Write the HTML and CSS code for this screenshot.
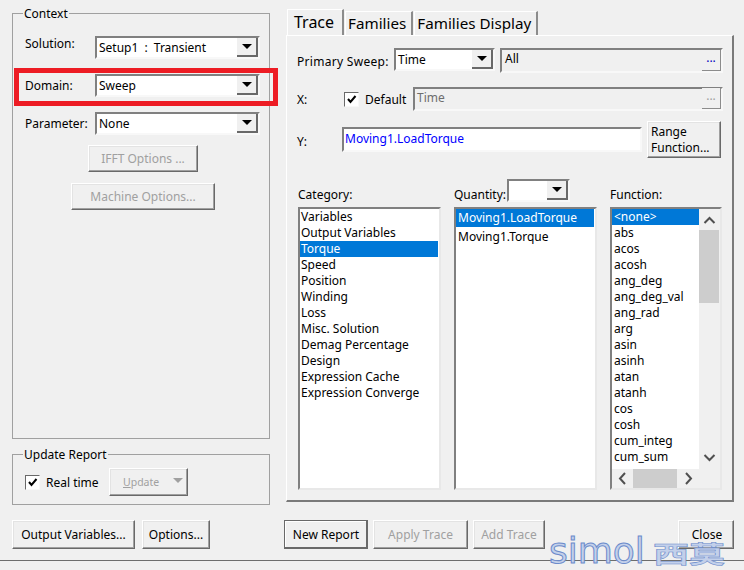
FILE: index.html
```html
<!DOCTYPE html>
<html lang="en">
<head>
  <meta charset="UTF-8" />
  <title>Report</title>
  <link rel="stylesheet" href="styles.css">
</head>
<body>
<div class="dialog">
  <div class="main">
    <!-- Left column -->
    <div class="side">
      <fieldset class="group context">
        <legend>Context</legend>
        <div class="ctx-row">
          <label class="raised">Solution:</label>
          <div class="combo wide"><span>Setup1 : Transient</span><i class="drop"><b></b></i></div>
        </div>
        <div class="ctx-row">
          <label>Domain:</label>
          <div class="combo wide"><span>Sweep</span><i class="drop"><b></b></i></div>
        </div>
        <div class="ctx-row">
          <label>Parameter:</label>
          <div class="combo wide"><span>None</span><i class="drop"><b></b></i></div>
        </div>
        <button class="btn off ifft">IFFT Options ...</button>
        <button class="btn off machine">Machine Options...</button>
      </fieldset>
      <fieldset class="group update">
        <legend>Update Report</legend>
        <div class="update-row">
          <span class="check"><svg width="11" height="11" viewBox="0 0 11 11"><path d="M2 5l2.500 3L9.500 2" fill="none" stroke="#000" stroke-width="2"/></svg></span>
          <span class="rt">Real time</span>
          <button class="btn off upd"><u>U</u>pdate<b class="up-arrow"></b></button>
        </div>
      </fieldset>
    </div>

    <!-- Tabs -->
    <div class="tabs-area">
      <div class="tabs">
        <div class="tab active">Trace</div>
        <div class="tab">Families</div>
        <div class="tab">Families Display</div>
      </div>
      <div class="panel">
        <div class="sweep-row">
          <label class="sweep-label">Primary Sweep:</label>
          <div class="combo time"><span>Time</span><i class="drop"><b></b></i></div>
          <div class="field all"><span>All</span><button class="dots">...</button></div>
        </div>
        <div class="x-row">
          <label class="x-label">X:</label>
          <span class="check"><svg width="11" height="11" viewBox="0 0 11 11"><path d="M2 5l2.500 3L9.500 2" fill="none" stroke="#000" stroke-width="2"/></svg></span>
          <span class="default">Default</span>
          <div class="field xval"><span>Time</span><button class="dots dim">...</button></div>
        </div>
        <div class="y-row">
          <label class="y-label">Y:</label>
          <div class="y-input">Moving1.LoadTorque</div>
          <button class="btn range">Range<br>Function...</button>
        </div>
        <div class="lists">
          <div class="col cat">
            <div class="col-head">Category:</div>
            <ul class="list">
              <li>Variables</li>
              <li>Output Variables</li>
              <li class="sel">Torque</li>
              <li>Speed</li>
              <li>Position</li>
              <li>Winding</li>
              <li>Loss</li>
              <li>Misc. Solution</li>
              <li>Demag Percentage</li>
              <li>Design</li>
              <li>Expression Cache</li>
              <li>Expression Converge</li>
            </ul>
          </div>
          <div class="col qty">
            <div class="col-head">Quantity:<div class="combo mini"><i class="drop"><b></b></i></div></div>
            <ul class="list">
              <li class="sel">Moving1.LoadTorque</li>
              <li>Moving1.Torque</li>
            </ul>
          </div>
          <div class="col fn">
            <div class="col-head">Function:</div>
            <div class="list fn-list">
              <div class="fn-top">
                <ul class="fn-items">
                  <li class="sel">&lt;none&gt;</li>
                  <li>abs</li>
                  <li>acos</li>
                  <li>acosh</li>
                  <li>ang_deg</li>
                  <li>ang_deg_val</li>
                  <li>ang_rad</li>
                  <li>arg</li>
                  <li>asin</li>
                  <li>asinh</li>
                  <li>atan</li>
                  <li>atanh</li>
                  <li>cos</li>
                  <li>cosh</li>
                  <li>cum_integ</li>
                  <li>cum_sum</li>
                </ul>
                <div class="vbar">
                  <svg class="arrow" width="17" height="21" viewBox="0 0 17 21"><path d="M3.500 14l5-5 5 5" fill="none" stroke="#505050" stroke-width="2"/></svg>
                  <div class="vtrack"><div class="vthumb"></div></div>
                  <svg class="arrow" width="17" height="16" viewBox="0 0 17 16"><path d="M3.500 6l5 5 5-5" fill="none" stroke="#505050" stroke-width="2"/></svg>
                </div>
              </div>
              <div class="hbar">
                <svg class="arrow" width="21" height="19" viewBox="0 0 21 19"><path d="M13 4l-5 5.500 5 5.500" fill="none" stroke="#505050" stroke-width="2"/></svg>
                <div class="hthumb"></div>
                <svg class="arrow" width="21" height="19" viewBox="0 0 21 19"><path d="M9 4l5 5.500-5 5.500" fill="none" stroke="#505050" stroke-width="2"/></svg>
              </div>
            </div>
          </div>
        </div>
      </div>
    </div>
  </div>

  <!-- Bottom buttons -->
  <div class="bottom">
    <button class="btn output">Output Variables...</button>
    <button class="btn options">Options...</button>
    <button class="btn new-report">New Report</button>
    <button class="btn off apply">Apply Trace</button>
    <button class="btn off add">Add Trace</button>
    <button class="btn close">Close</button>
  </div>
  <div class="rule"></div>

  <div class="redbox"></div>
  <div class="mark">simol<span>西莫</span></div>
</div>
</body>
</html>
```

FILE: styles.css
```css
html, body {
  margin: 0;
  background: #f0f0f0;
}
.dialog {
  position: relative;
  height: 570px;
  overflow: hidden;
  font-family: "Noto Sans", sans-serif;
  font-size: 12px;
  color: #000;
}
.main {
  display: flex;
  height: 510px;
}
.side {
  width: 258px;
  margin: 13px 0 0 12px;
}
.group {
  margin: 0;
  padding: 0;
  border: 1px solid #a0a0a0;
  min-width: 0;
  box-sizing: border-box;
}
.group legend {
  margin-left: -2px;
  padding: 2px 1px 0;
  line-height: 14px;
  font-size: 12px;
}
.context {
  height: 434px;
  margin-top: -8px;
  padding: 15px 0 0 12px;
}
.ctx-row {
  display: flex;
  align-items: center;
  height: 22px;
}
.ctx-row + .ctx-row {
  margin-top: 16px;
}
.ctx-row label {
  width: 70px;
}
.ctx-row .raised {
  margin-bottom: 8px;
}
.combo {
  display: flex;
  justify-content: space-between;
  box-sizing: border-box;
  height: 23px;
  background: #fff;
  border: 2px solid;
  border-color: #808080 #f8f8f8 #f8f8f8 #808080;
  line-height: 19px;
  padding-left: 2px;
}
.combo span {
  word-spacing: 3px;
}
.combo.wide { width: 165px; }
.drop {
  display: flex;
  align-items: center;
  justify-content: center;
  box-sizing: border-box;
  width: 21px;
  height: 19px;
  background: #f0f0f0;
  border-right: 2px solid #696969;
  border-bottom: 2px solid #696969;
}
.drop b {
  width: 0;
  height: 0;
  border-left: 5px solid transparent;
  border-right: 5px solid transparent;
  border-top: 5px solid #000;
}
.btn {
  display: block;
  box-sizing: border-box;
  padding: 0;
  background: #f0f0f0;
  border: 1px solid;
  border-color: #fff #696969 #696969 #fff;
  box-shadow: inset -1px -1px 0 #a0a0a0, inset 1px 1px 0 #e3e3e3;
  font: inherit;
  color: #000;
}
.btn.off { color: #a0a0a0; }
.ifft {
  width: 110px;
  height: 27px;
  margin: 11px 0 0 63px;
}
.machine {
  width: 144px;
  height: 27px;
  margin: 11px 0 0 46px;
}
.update {
  height: 59px;
  margin-top: 7px;
  padding: 6px 0 0 12px;
}
.update-row {
  display: flex;
  align-items: center;
}
.check {
  display: flex;
  align-items: center;
  justify-content: center;
  box-sizing: border-box;
  width: 15px;
  height: 15px;
  background: #fff;
  border: 1px solid;
  border-color: #696969 #f8f8f8 #f8f8f8 #696969;
}
.rt {
  margin-left: 6px;
  width: 63px;
}
.upd {
  display: flex;
  align-items: center;
  width: 79px;
  height: 28px;
  padding-left: 13px;
  font-size: 10.500px;
}
.up-arrow {
  margin: 0 0 4px 14px;
  width: 0;
  height: 0;
  border-left: 5px solid transparent;
  border-right: 5px solid transparent;
  border-top: 5px solid #a0a0a0;
}

/* Tabs */
.tabs-area {
  width: 448px;
  margin: 9px 0 0 16px;
}
.tabs {
  display: flex;
  height: 26px;
  align-items: flex-end;
  padding-left: 1px;
}
.tab {
  box-sizing: border-box;
  height: 24px;
  padding: 1px 5px 0 2px;
  margin-right: 1px;
  background: #f0f0f0;
  border-top: 1px solid #fff;
  border-left: 1px solid #fff;
  border-right: 2px solid #8c8c8c;
  font-size: 15.200px;
  line-height: 20px;
}
.tab.active {
  height: 26px;
  padding: 2px 8px 0 6px;
  font-size: 16px;
}
.panel {
  box-sizing: border-box;
  height: 467px;
  border-top: 1px solid #fff;
  border-left: 1px solid #fff;
  border-right: 2px solid #7a7a7a;
  border-bottom: 2px solid #7a7a7a;
  padding: 12px 0 0 10px;
}
.sweep-row {
  display: flex;
  align-items: flex-start;
  height: 39px;
}
.sweep-label {
  width: 97px;
  padding-top: 5px;
  letter-spacing: 0.300px;
}
.combo.time {
  width: 101px;
  height: 23px;
}
.field {
  display: flex;
  justify-content: space-between;
  box-sizing: border-box;
  height: 25px;
  border: 2px solid;
  border-color: #808080 #f8f8f8 #f8f8f8 #808080;
  padding-left: 3px;
  line-height: 17px;
}
.all {
  width: 223px;
  margin-left: 5px;
}
.dots {
  align-self: flex-end;
  box-sizing: border-box;
  width: 19px;
  height: 21px;
  padding: 0 0 4px 0;
  background: #f0f0f0;
  border: 0;
  border-right: 1px solid #8c8c8c;
  border-bottom: 1px solid #8c8c8c;
  font: inherit;
  line-height: 10px;
  color: #0000c0;
}
.dots.dim { color: #a0a0a0; }
.x-row {
  display: flex;
  align-items: center;
  height: 24px;
}
.x-label { width: 47px; }
.default {
  margin-left: 6px;
  width: 48px;
}
.xval {
  width: 310px;
  height: 24px;
  padding-left: 2px;
  line-height: 18px;
  color: #6d6d6d;
}
.y-row {
  display: flex;
  align-items: center;
  height: 37px;
  margin-top: 10px;
}
.y-label {
  width: 45px;
  padding-top: 4px;
}
.y-input {
  box-sizing: border-box;
  width: 300px;
  height: 25px;
  background: #fff;
  border: 2px solid;
  border-color: #808080 #f8f8f8 #f8f8f8 #808080;
  padding-left: 1px;
  line-height: 19px;
  color: #0000ff;
}
.range {
  width: 74px;
  height: 37px;
  margin-left: 5px;
  padding-left: 3px;
  text-align: left;
  line-height: 16px;
}
.lists {
  display: flex;
  margin: 22px 0 0 1px;
}
.col-head {
  display: flex;
  align-items: flex-end;
  height: 27px;
  padding-bottom: 4px;
  box-sizing: border-box;
  line-height: 16px;
}
.cat { width: 156px; }
.qty { width: 156px; }
.fn { width: 112px; }
.combo.mini {
  width: 63px;
  height: 23px;
  margin: 0 0 1px 1px;
  justify-content: flex-end;
}
.list {
  box-sizing: border-box;
  list-style: none;
  margin: 0;
  width: 143px;
  height: 283px;
  padding: 0 1px 0 0;
  background: #fff;
  border: 2px solid;
  border-color: #808080 #e8e8e8 #e8e8e8 #808080;
  overflow: hidden;
}
.list li {
  height: 16px;
  line-height: 16px;
  padding-left: 1px;
  white-space: nowrap;
}
.qty .list li {
  height: 18px;
  line-height: 18px;
  margin-bottom: 1px;
  padding-left: 2px;
}
.list .sel {
  background: #0078d7;
  color: #fff;
}
.fn-list {
  width: 112px;
  padding: 0;
  background: #f0f0f0;
}
.fn-top {
  display: flex;
  height: 260px;
}
.fn-items {
  list-style: none;
  margin: 0;
  width: 87px;
  padding: 0;
  background: #fff;
}
.fn-items li {
  padding-left: 2px;
}
.vbar {
  width: 21px;
  display: flex;
  flex-direction: column;
  align-items: center;
  height: 256px;
}
.vtrack {
  flex: 1;
  width: 20px;
  margin-right: 1px;
}
.vthumb {
  height: 73px;
  background: #cdcdcd;
}
.arrow { flex: none; }
.hbar {
  display: flex;
  align-items: center;
  height: 19px;
}
.hthumb {
  width: 44px;
  height: 19px;
  background: #cdcdcd;
}

/* Bottom row */
.bottom {
  display: flex;
  align-items: flex-start;
  height: 39px;
  box-sizing: border-box;
  padding: 10px 0 0 12px;
}
.bottom .btn {
  height: 29px;
}
.output { width: 123px; }
.options { width: 68px; margin-left: 7px; }
.new-report {
  width: 84px;
  margin-left: 74px;
  border: 1px solid #696969;
  box-shadow: inset -1px -1px 0 #696969, inset 1px 1px 0 #fff;
}
.apply { width: 95px; margin-left: 5px; }
.add { width: 72px; margin-left: 5px; }
.close { width: 56px; margin-left: 133px; padding-left: 2px; }
.rule {
  margin-top: 11px;
  height: 1px;
  background: #6d6d6d;
}

/* Overlays */
.redbox {
  position: absolute;
  left: 14px;
  top: 68px;
  width: 254px;
  height: 28px;
  border: 5px solid #ed1c24;
}
.mark {
  position: absolute;
  left: 549px;
  top: 536px;
  height: 30px;
  font-family: "DejaVu Sans", "Noto Sans CJK SC", sans-serif;
  font-size: 36px;
  line-height: 30px;
  white-space: nowrap;
  color: #c3d0ea;
  -webkit-text-stroke: 1px #6b8bcb;
}
.mark span {
  display: inline-block;
  margin-left: 8px;
  font-size: 24px;
  font-weight: 700;
  line-height: 24px;
  transform: scaleX(1.5);
  transform-origin: left;
  -webkit-text-stroke: 0.500px #6b8bcb;
}
```
